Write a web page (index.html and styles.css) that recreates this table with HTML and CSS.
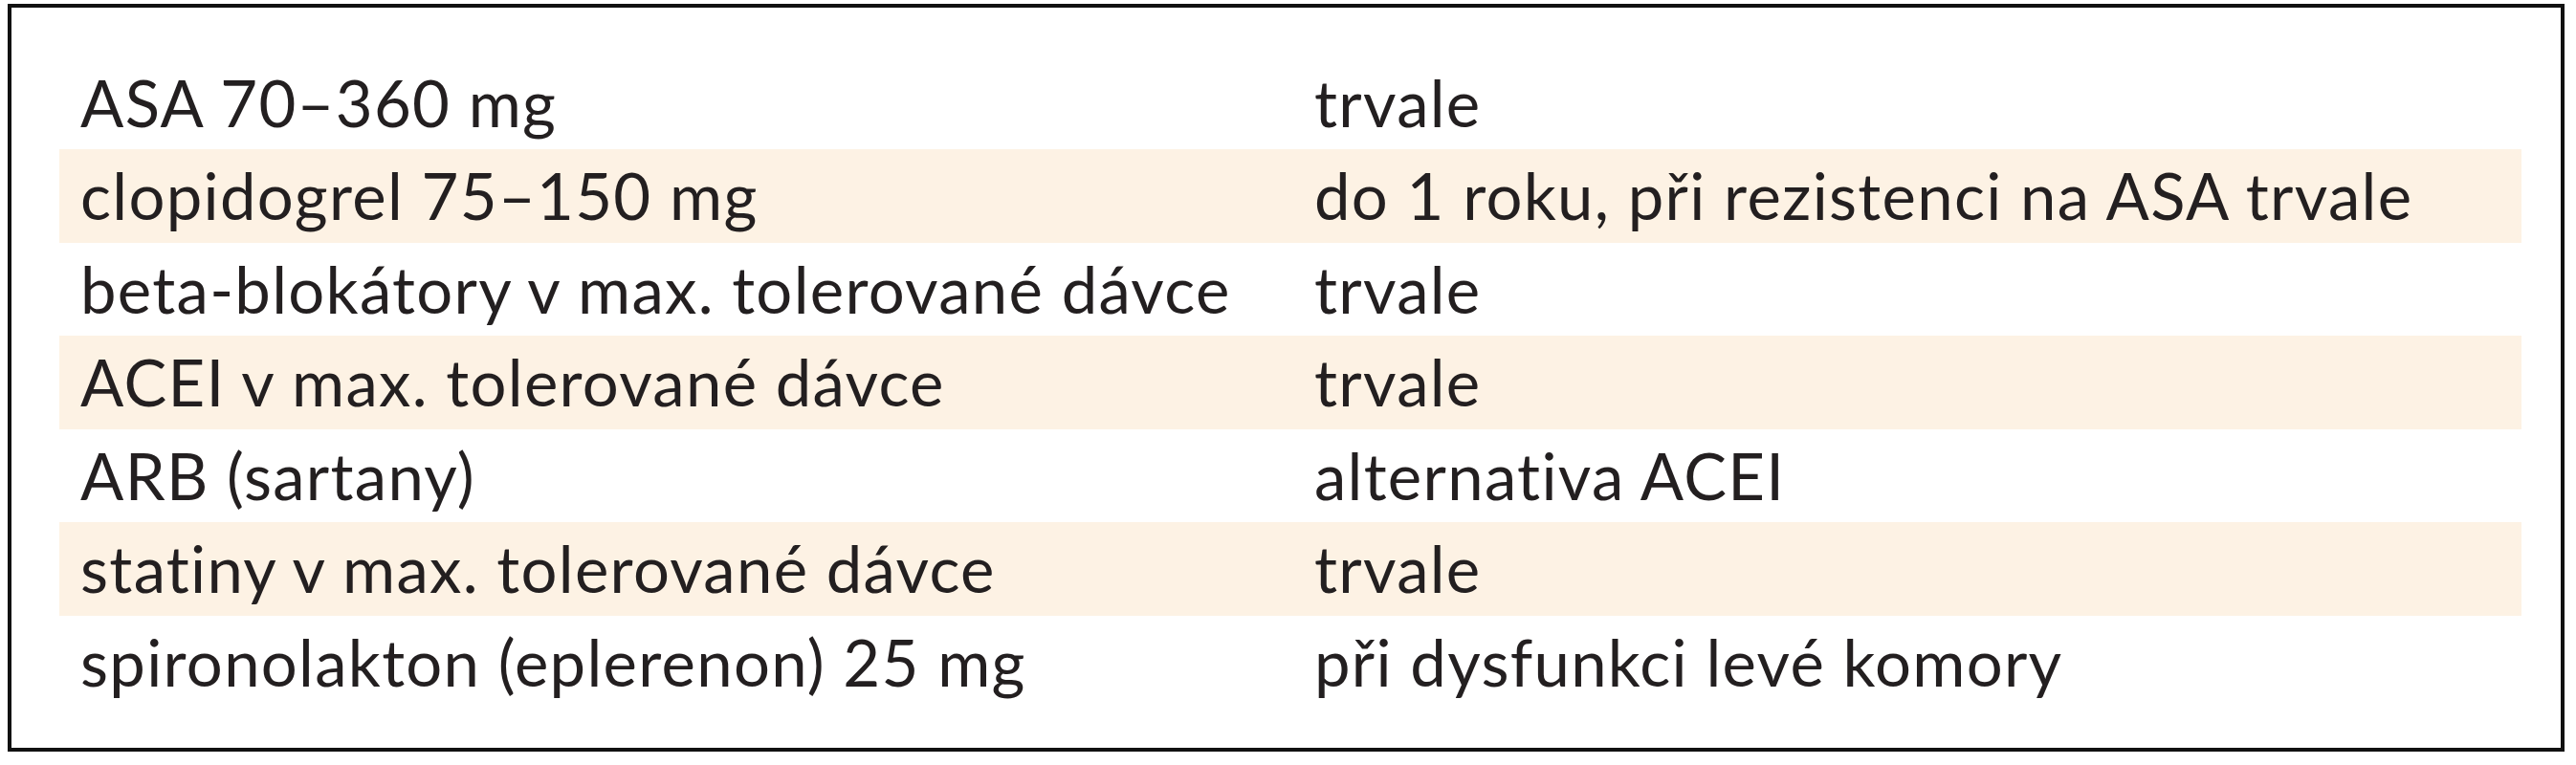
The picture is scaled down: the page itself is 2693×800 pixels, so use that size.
FILE: index.html
```html
<!DOCTYPE html>
<html lang="cs">
<head>
<meta charset="utf-8">
<title>Tabulka</title>
<link rel="stylesheet" href="styles.css">
</head>
<body>
<div class="page">
  <div class="frame">
    <div class="table">
      <div class="row"><div class="c1">ASA 70–360 mg</div><div class="c2">trvale</div></div>
      <div class="row alt"><div class="c1">clopidogrel 75–150 mg</div><div class="c2">do 1 roku, při rezistenci na ASA trvale</div></div>
      <div class="row"><div class="c1">beta-blokátory v max. tolerované dávce</div><div class="c2">trvale</div></div>
      <div class="row alt"><div class="c1">ACEI v max. tolerované dávce</div><div class="c2">trvale</div></div>
      <div class="row"><div class="c1">ARB (sartany)</div><div class="c2">alternativa ACEI</div></div>
      <div class="row alt"><div class="c1">statiny v max. tolerované dávce</div><div class="c2">trvale</div></div>
      <div class="row"><div class="c1">spironolakton (eplerenon) 25 mg</div><div class="c2">při dysfunkci levé komory</div></div>
    </div>
  </div>
</div>
</body>
</html>
```

FILE: styles.css
```css
html, body {
  margin: 0;
  padding: 0;
  background: #ffffff;
}
.page {
  padding: 4px 0 0 8px;
}
.frame {
  box-sizing: border-box;
  width: 2673px;
  height: 782px;
  border: 4px solid #111111;
  padding: 50.5px 41px 0 50px;
  background: #ffffff;
}
.table {
  display: flex;
  flex-direction: column;
}
.row {
  display: grid;
  grid-template-columns: 1312px 1fr;
  height: 97.5px;
  line-height: 97.5px;
  font-family: Lato, "Open Sans", sans-serif;
  font-size: 67px;
  letter-spacing: 1.3px;
  color: #231f20;
  white-space: nowrap;
}
.row.alt {
  background: #fdf2e4;
}
.c1 {
  padding-left: 22px;
}
```
